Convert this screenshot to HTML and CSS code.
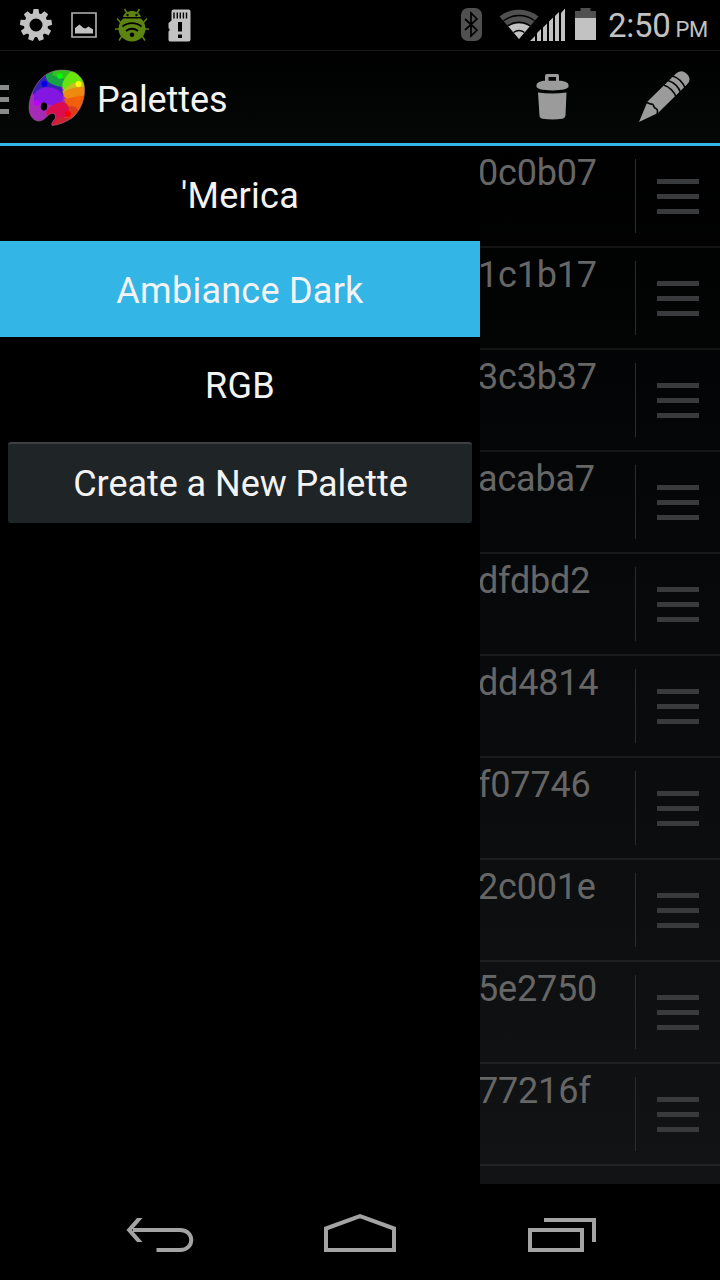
FILE: index.html
```html
<!DOCTYPE html>
<html lang="en">
<head>
<meta charset="utf-8">
<title>Palettes</title>
<link rel="stylesheet" href="styles.css">
</head>
<body>
<div class="screen">
  <div class="status">
    <div class="notifications">
      <svg width="34" height="34" viewBox="19 8 34 34"><g fill="#c2c2c2"><path fill-rule="evenodd" d="M36 13a12 12 0 1 0 0 24a12 12 0 1 0 0-24zm0 5.500a6.500 6.500 0 1 1 0 13a6.500 6.500 0 1 1 0-13z"/><g id="teeth"><path id="tooth" d="M32.700 14.500l.8-5.500h5l.8 5.500z"/><use href="#tooth" transform="rotate(40 36 25)"/><use href="#tooth" transform="rotate(80 36 25)"/><use href="#tooth" transform="rotate(120 36 25)"/><use href="#tooth" transform="rotate(160 36 25)"/><use href="#tooth" transform="rotate(200 36 25)"/><use href="#tooth" transform="rotate(240 36 25)"/><use href="#tooth" transform="rotate(280 36 25)"/><use href="#tooth" transform="rotate(320 36 25)"/></g></g></svg>
      <svg width="26" height="26" viewBox="71 12 26 26"><path d="M72 13h24v24h-24z" fill="none" stroke="#b5b5b5" stroke-width="1.600"/><path d="M75 33.500v-5.500l4.500-3.500 4 3.500 2 .5 3-2 4.500 3v4z" fill="#c2c2c2"/></svg>
      <svg width="34" height="34" viewBox="115 8 34 34"><g fill="none" stroke="#5c8411" stroke-width="1.500"><path d="M127 13l-2.500-4M137 13l2.500-4M121 23l-4-4.500M143 23l4-4.500M119 29h-4M145 29h4M122 36l-3 4.500M142 36l3 4.500"/></g><path fill="#5c8411" d="M123 17c1-4 5-6 9-6s8 2 9 6zM123 18.500h18c3 3 4.500 6.500 4.500 10 0 7.500-6 13-13.500 13s-13.500-5.500-13.500-13c0-3.500 1.500-7 4.500-10z"/><g fill="none" stroke="#000" stroke-width="1.900"><path d="M122.500 26.500c5.500-4.500 13.500-4.500 19 0M126 31c4-3 8-3 12 0"/></g><circle cx="132" cy="34.800" r="2.200" fill="#000"/><circle cx="127.500" cy="15" r="1.200"/><circle cx="136.500" cy="15" r="1.200"/></svg>
      <svg width="23" height="33" viewBox="168 8.500 23 33"><path fill="#c2c2c2" d="M173.500 9h15q2 0 2 2v28q0 2-2 2h-18.500q-1.500 0-1.500-2v-8l1-1v-1.500l-1-1v-5l3-2.500v-9q0-2 2-2z"/><path stroke="#000" stroke-width="1.400" d="M174 12v6M177.300 12v6M180.300 12v6M183.400 12v6M186.500 12v6"/><path d="M178 21.500h4v9.500h-4zM178 34h4v3.500h-4z"/></svg>
    </div>
    <div class="system">
      <svg width="21" height="34" viewBox="461 8 21 34"><rect x="461" y="8" width="21" height="33" rx="7" fill="#505050"/><path d="M465 19l12 11-6 6v-23l6 6-12 11" fill="none" stroke="#000" stroke-width="1.700"/></svg>
      <svg width="66" height="34" viewBox="499 8 66 34"><path fill="#505050" d="M519 39l-19.500-22.500c11-9 28-9 39 0z"/><path fill="#c2c2c2" d="M519 39l-10.500-12.500c6-4 15-4 21 0z"/><g fill="none" stroke="#000" stroke-width="1.400"><path d="M503.500 20.800c9-7 22-7 31 0M507.500 26c7-5 16-5 23 0M513.500 32.500c3.500-2.500 7.500-2.500 11 0"/></g><path fill="#c2c2c2" d="M530 41l5-5v5zM537 41v-8l4-4v12zM543 41v-13.500l4-4v17.500zM549 41v-19.500l4-4v23.500zM555 41v-25l4-4v29zM561 41v-28l4-4.500v32.500z"/></svg>
      <svg width="21" height="32" viewBox="575 8 21 32"><path fill="#505050" d="M575 18v-7h5.500v-3h10v3h5.500v7z"/><path fill="#c2c2c2" d="M575 18h21v22h-21z"/></svg>
      <div class="clock">2:50<span class="meridiem">PM</span></div>
    </div>
  </div>

  <div class="actionbar">
    <svg class="menu" width="9" height="29" viewBox="0 0 9 29"><path fill="#8a8a8a" d="M0 0h9v5h-9zM0 12h9v5h-9zM0 24h9v5h-9z"/></svg>
    <svg class="logo" width="58" height="58" viewBox="28 69 58 58">
      <defs>
        <clipPath id="blob"><path id="outline" d="M62 70c8 0 15 2 19 8 4 5 4 12 3 19-2 9-6 16-12 21-6 4-13 7-20 7.500-1.500-3.500 4-5.500 3.500-9.500-1-4-5-3-8 0-3 3-6 5.500-9.500 5-6-1-9-7-9-13 0-10 4-19 10-27 6-7 13-11 23-11z"/></clipPath>
        <filter id="soft" x="-20%" y="-20%" width="140%" height="140%"><feGaussianBlur stdDeviation=".6"/></filter>
      </defs>
      <g clip-path="url(#blob)">
        <path fill="#a62ab8" d="M28 69h58v58h-58z"/>
        <g filter="url(#soft)">
          <path fill="#3523b4" d="M30 90l10-20h16l8 26-10-5-20 4z"/>
          <path fill="#8418e2" d="M34 95c4-9 15-9 22-6 7 3 9 10 5 14-8 5-21-1-27-1z"/>
          <path fill="#19a344" d="M46 72l12-4 14 14c-6 7-15 5-20 2-5-2-7-6-6-12z"/>
          <path fill="#33c01b" d="M54 68h21l-7 14c-5-6-10-4-16-7z"/>
          <path fill="#66e60d" d="M70 72h12l4 12c-10 0-17 4-22 7-4-7 0-12 6-19z"/>
          <path fill="#c9bf20" d="M86 82l-14 1-10 9 8 4 16-8z"/>
          <path fill="#ee8a10" d="M63 93c5-5 12-6 23-6v16c-8-4-22 0-23-10z"/>
          <path fill="#ef5f0b" d="M64 99l22-4v30h-12z"/>
          <path fill="#dc3a1c" d="M65 107c5-1 14-2 13 6l-12 13-8-6z"/>
          <path fill="#dc104d" d="M46 113c1-6 9-10 16-11 7 0 10 10 3 15l-14 9z"/>
          <path fill="#cc2430" d="M52 127l6-10 16 2-4 8z"/>
          <circle cx="44.500" cy="84" r="3" fill="#0000ee"/><circle cx="60" cy="76" r="2.800" fill="#00ff08"/><circle cx="78.500" cy="84" r="3" fill="#ffff00"/><circle cx="78.500" cy="98" r="2.500" fill="#ff6500"/><circle cx="68" cy="114" r="3" fill="#ff0000"/><circle cx="37" cy="103" r="2.800" fill="#c000ff"/>
        </g>
      </g>
      <ellipse cx="44" cy="106.500" rx="3.200" ry="4" fill="#020202"/>
      <use href="#outline" fill="none" stroke="#8b6e70" stroke-opacity=".65" stroke-width=".8"/>
    </svg>
    <h1 class="title">Palettes</h1>
    <svg class="trash" width="33" height="46" viewBox="536 74 33 46"><g fill="#9b9b9b"><path fill-rule="evenodd" d="M545 82v-6q0-2 2-2h10.500q1.500 0 1.500 2v6zM548.500 77v4h7.500v-4z"/><path d="M536.500 85q0-3 7-4.200h18q7 1.200 7 4.200v2q-1 3-16 3.500-15-.5-16-3.500z"/><path d="M538 92.500q14 2 28.500 0l-1 23q-.5 2.500-3 3.200-10 1.500-20 0-3-.7-3-3.200z"/></g></svg>
    <svg class="pencil" width="52" height="52" viewBox="638 72 52 52"><path fill="#9b9b9b" d="M639 123l8.500-20.500 28-27.500q4.500-4.500 9.500-1.500 4.500 2.500 4.500 7.500-.2 2.500-2.500 4.500l-29 28.500z"/><g fill="none" stroke="#060707" stroke-width="1.700"><path d="M645 103.500c2.500-1 4.500 2 7 1.500 1.500 0 1.500 3 3 4 1.500.8 2.500 1 2.500 3l-.3 4"/><path d="M663.500 86q9.500 3 13 13M668 81.500q9.500 3 13 13M672.500 77q9.500 3 13 13"/></g></svg>
  </div>

  <div class="content">
    <div class="drawer">
      <div class="item">'Merica</div>
      <div class="item selected">Ambiance Dark</div>
      <div class="item">RGB</div>
      <button class="create">Create a New Palette</button>
    </div>
    <div class="colors">
      <div class="row"><span class="hex">0c0b07</span><span class="handle"><i></i><i></i><i></i></span></div>
      <div class="row"><span class="hex">1c1b17</span><span class="handle"><i></i><i></i><i></i></span></div>
      <div class="row"><span class="hex">3c3b37</span><span class="handle"><i></i><i></i><i></i></span></div>
      <div class="row"><span class="hex">acaba7</span><span class="handle"><i></i><i></i><i></i></span></div>
      <div class="row"><span class="hex">dfdbd2</span><span class="handle"><i></i><i></i><i></i></span></div>
      <div class="row"><span class="hex">dd4814</span><span class="handle"><i></i><i></i><i></i></span></div>
      <div class="row"><span class="hex">f07746</span><span class="handle"><i></i><i></i><i></i></span></div>
      <div class="row"><span class="hex">2c001e</span><span class="handle"><i></i><i></i><i></i></span></div>
      <div class="row"><span class="hex">5e2750</span><span class="handle"><i></i><i></i><i></i></span></div>
      <div class="row"><span class="hex">77216f</span><span class="handle"><i></i><i></i><i></i></span></div>
    </div>
  </div>

  <div class="navbar">
    <svg width="68" height="36" viewBox="126 1216 68 36"><path d="M133 1230h47c15 0 15 20 0 20h-23.500" fill="none" stroke="#a3a3a3" stroke-width="4"/><path fill="#a3a3a3" d="M126.500 1230l10.500-12h5.500l-10.500 12 10.500 12h-5.500z"/></svg>
    <svg class="home" width="72" height="38" viewBox="324 1214 72 38"><path d="M326 1250v-21.500l34-12.300 34 12.300v21.500z" fill="none" stroke="#a3a3a3" stroke-width="4"/></svg>
    <svg width="68" height="34" viewBox="528 1218 68 34"><path d="M530 1230h52v20h-52zM544 1220h50v22" fill="none" stroke="#a3a3a3" stroke-width="4"/></svg>
  </div>
</div>
</body>
</html>
```
FILE: styles.css
```css
* { box-sizing: border-box; }
body { margin: 0; background: #000; font-family: Roboto, "Noto Sans", sans-serif; }
svg { display: block; flex: none; }
.screen { width: 720px; height: 1280px; display: flex; flex-direction: column; overflow: hidden; background: #000; }

.status { height: 50px; flex: none; display: flex; justify-content: space-between; align-items: center; padding: 0 12px 0 19px; }
.notifications { display: flex; align-items: center; gap: 18px; }
.notifications svg:last-child { margin-left: 1px; }
.system { display: flex; align-items: center; }
.system svg { margin-right: 17px; }
.system svg:nth-child(2) { margin-right: 10px; }
.system svg:nth-child(3) { margin: -2px 12px 0 0; }
.clock { width: 100px; padding-top: 6px; font-size: 33px; line-height: 44px; letter-spacing: -.3px; color: #c2c2c2; white-space: nowrap; }
.meridiem { margin-left: 5px; font-size: 22px; }

.actionbar { height: 96px; flex: none; display: flex; align-items: center; border-top: 1px solid #161616; border-bottom: 3px solid #33b5e5; background: linear-gradient(#000, #050707); }
.menu { margin-top: 5px; }
.logo { margin: 1px 0 0 19px; }
.title { width: 438px; margin: 6px 0 0 11px; font-size: 36px; line-height: 42px; font-weight: 400; letter-spacing: -.1px; color: #f3f3f3; }
.trash { margin-left: 1px; }
.pencil { margin-left: 69px; }

.content { height: 1038px; flex: none; display: flex; }
.drawer { position: relative; z-index: 1; width: 480px; background: #000; color: #f3f3f3; font-size: 36px; }
.item { height: 96px; line-height: 98px; letter-spacing: .25px; text-align: center; }
.item:first-child { height: 95px; line-height: 100px; }
.selected { line-height: 100px; background: #33b5e5; }
.create { display: block; width: 464px; height: 81px; margin: 9px 8px 0; padding: 0 0 0 1px; border: 0; border-top: 2px solid #3b3f41; border-radius: 3px; background: #1f2427; color: inherit; font: inherit; letter-spacing: -.05px; text-align: center; }

.colors { width: 240px; background: linear-gradient(#000, #07090a 45%, #121315); }
.row { height: 102px; display: flex; align-items: flex-start; border-bottom: 2px solid rgba(255, 255, 255, .07); }
.hex { width: 157px; margin: 6px 0 0 -2px; font-size: 36px; line-height: 42px; letter-spacing: -.2px; color: #666; }
.handle { height: 74px; width: 85px; margin-top: 13px; padding: 20px 21px 0 20.500px; border-left: 1px solid #2b2c2d; display: flex; flex-direction: column; gap: 9.800px; }
.handle i { width: 42px; height: 5px; background: #393a3b; }

.navbar { height: 96px; flex: none; display: flex; align-items: flex-end; padding: 0 124px 28px 126px; justify-content: space-between; }
.home { margin-right: 2px; }
```
